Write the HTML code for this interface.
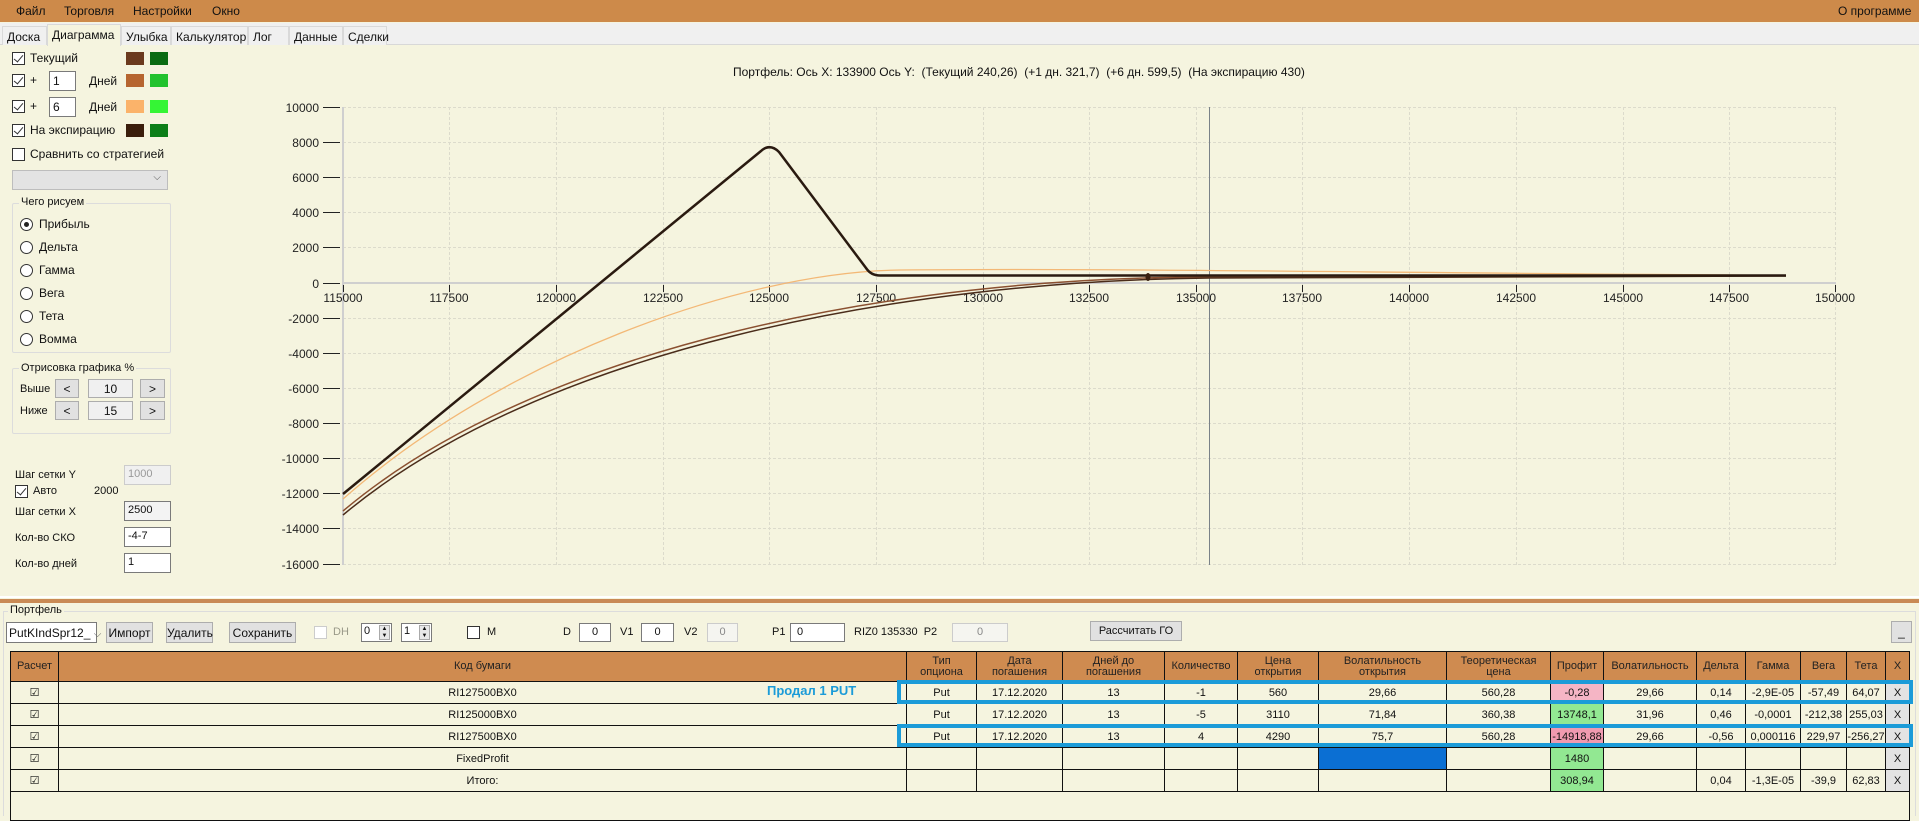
<!DOCTYPE html>
<html><head><meta charset="utf-8">
<style>
*{box-sizing:border-box;margin:0;padding:0}
body{width:1919px;height:816px;overflow:hidden;background:#f5f4df;font-family:"Liberation Sans",sans-serif;font-size:12px;color:#111;position:relative}
.a{position:absolute;white-space:nowrap}
.menu{left:0;top:0;width:1919px;height:22px;background:#cd8a4a}
.menu span{position:absolute;top:4px;font-size:12px}
.tabs{left:0;top:23px;width:1919px;height:22px;background:#f0f0f0;border-bottom:1px solid #d8d8d8}
.tab{position:absolute;top:3px;height:19px;border:1px solid #d9d9d9;border-bottom:none;background:#f0f0f0;font-size:12px;padding:3px 4px 0}
.cb{position:absolute;width:13px;height:13px;border:1px solid #333;background:#fff}
.cb.k::after{content:"";position:absolute;left:3px;top:0px;width:4px;height:8px;border-right:1px solid #333;border-bottom:1px solid #333;transform:rotate(40deg)}
.sw{position:absolute;width:18px;height:13px}
.inp{position:absolute;background:#fff;border:1px solid #7a7a7a;font-size:12px;padding:2px 3px;height:20px}
.rb{position:absolute;width:13px;height:13px;border:1px solid #333;border-radius:50%;background:#fff}
.grp{position:absolute;border:1px solid #dcdcdc;border-radius:2px}
.btn{position:absolute;background:#e1e1e1;border:1px solid #adadad;font-size:12px;text-align:center;padding-top:3px;height:21px}
table{position:absolute;left:10px;top:651px;border-collapse:collapse;table-layout:fixed;font-size:11px;font-family:"Liberation Sans Narrow","Liberation Sans",sans-serif}
td{border:1px solid #111;text-align:center;height:22px;padding:0;overflow:hidden;white-space:nowrap}
tr.h td{background:#cf8b50;height:30px;line-height:11px;font-size:11px;color:#222}
.pk{background:#f5b5c5}.pk2{background:#f09ab0}.gr{background:#92e892}.bl{background:#0b6fd3}.x{background:#e3e3e3}
</style></head><body>
<div class="a menu">
<span style="left:16px">Файл</span><span style="left:64px">Торговля</span><span style="left:133px">Настройки</span><span style="left:212px">Окно</span><span style="left:1838px">О программе</span>
</div>
<div class="a tabs">
<div class="tab" style="left:2px;width:45px">Доска</div>
<div class="tab" style="left:47px;width:74px;top:1px;height:22px;background:#f5f4df">Диаграмма</div>
<div class="tab" style="left:121px;width:50px">Улыбка</div>
<div class="tab" style="left:171px;width:77px">Калькулятор</div>
<div class="tab" style="left:248px;width:41px">Лог</div>
<div class="tab" style="left:289px;width:54px">Данные</div>
<div class="tab" style="left:343px;width:44px">Сделки</div>
</div>
<!-- left panel -->
<div class="cb k" style="left:12px;top:52px"></div><div class="a" style="left:30px;top:51px">Текущий</div>
<div class="sw" style="left:126px;top:52px;background:#6b3a1e"></div><div class="sw" style="left:150px;top:52px;background:#0a6b12"></div>
<div class="cb k" style="left:12px;top:74px"></div><div class="a" style="left:30px;top:73px">+</div>
<div class="inp" style="left:49px;top:71px;width:27px">1</div><div class="a" style="left:89px;top:74px">Дней</div>
<div class="sw" style="left:126px;top:74px;background:#b66530"></div><div class="sw" style="left:150px;top:74px;background:#22c22e"></div>
<div class="cb k" style="left:12px;top:100px"></div><div class="a" style="left:30px;top:99px">+</div>
<div class="inp" style="left:49px;top:97px;width:27px">6</div><div class="a" style="left:89px;top:100px">Дней</div>
<div class="sw" style="left:126px;top:100px;background:#fbb36a"></div><div class="sw" style="left:150px;top:100px;background:#35f535"></div>
<div class="cb k" style="left:12px;top:124px"></div><div class="a" style="left:30px;top:123px">На экспирацию</div>
<div class="sw" style="left:126px;top:124px;background:#3a1e0c"></div><div class="sw" style="left:150px;top:124px;background:#0c7e18"></div>
<div class="cb" style="left:12px;top:148px"></div><div class="a" style="left:30px;top:147px">Сравнить со стратегией</div>
<div class="a" style="left:12px;top:170px;width:156px;height:20px;background:#e3e3e3;border:1px solid #bdbdbd"><span style="position:absolute;right:6px;top:1px;font-size:10px;color:#555">⌵</span></div>
<div class="grp" style="left:12px;top:203px;width:159px;height:150px"></div>
<div class="a" style="left:19px;top:196px;background:#f5f4df;padding:0 2px;font-size:11px">Чего рисуем</div>
<div class="rb" style="left:20px;top:218px"><div style="position:absolute;left:3px;top:3px;width:5px;height:5px;border-radius:50%;background:#222"></div></div><div class="a" style="left:39px;top:217px">Прибыль</div>
<div class="rb" style="left:20px;top:241px"></div><div class="a" style="left:39px;top:240px">Дельта</div>
<div class="rb" style="left:20px;top:264px"></div><div class="a" style="left:39px;top:263px">Гамма</div>
<div class="rb" style="left:20px;top:287px"></div><div class="a" style="left:39px;top:286px">Вега</div>
<div class="rb" style="left:20px;top:310px"></div><div class="a" style="left:39px;top:309px">Тета</div>
<div class="rb" style="left:20px;top:333px"></div><div class="a" style="left:39px;top:332px">Вомма</div>
<div class="grp" style="left:12px;top:368px;width:159px;height:66px"></div>
<div class="a" style="left:19px;top:362px;background:#f5f4df;padding:0 2px;font-size:11px">Отрисовка графика %</div>
<div class="a" style="left:20px;top:383px;font-size:11px">Выше</div>
<div class="btn" style="left:55px;top:379px;width:24px;height:19px;padding-top:2px">&lt;</div>
<div class="a" style="left:88px;top:379px;width:45px;height:19px;border:1px solid #adadad;background:#f0f0f0;text-align:center;padding-top:2px">10</div>
<div class="btn" style="left:140px;top:379px;width:25px;height:19px;padding-top:2px">&gt;</div>
<div class="a" style="left:20px;top:405px;font-size:11px">Ниже</div>
<div class="btn" style="left:55px;top:401px;width:24px;height:19px;padding-top:2px">&lt;</div>
<div class="a" style="left:88px;top:401px;width:45px;height:19px;border:1px solid #adadad;background:#f0f0f0;text-align:center;padding-top:2px">15</div>
<div class="btn" style="left:140px;top:401px;width:25px;height:19px;padding-top:2px">&gt;</div>
<div class="a" style="left:15px;top:469px;font-size:11px">Шаг сетки Y</div>
<div class="inp" style="left:124px;top:465px;width:47px;background:#f0f0f0;border-color:#ccc;color:#999;font-size:11px">1000</div>
<div class="cb k" style="left:15px;top:485px"></div><div class="a" style="left:33px;top:485px;font-size:11px">Авто</div><div class="a" style="left:94px;top:485px;font-size:11px">2000</div>
<div class="a" style="left:15px;top:506px;font-size:11px">Шаг сетки X</div>
<div class="inp" style="left:124px;top:501px;width:47px;font-size:11px;background:#f3f3f3">2500</div>
<div class="a" style="left:15px;top:532px;font-size:11px">Кол-во СКО</div>
<div class="inp" style="left:124px;top:527px;width:47px;font-size:11px">-4-7</div>
<div class="a" style="left:15px;top:558px;font-size:11px">Кол-во дней</div>
<div class="inp" style="left:124px;top:553px;width:47px;font-size:11px">1</div>
<!-- chart -->
<div class="a" style="left:733px;top:65px;font-size:12px">Портфель: Ось X: 133900 Ось Y:&nbsp; (Текущий 240,26)&nbsp; (+1 дн. 321,7)&nbsp; (+6 дн. 599,5)&nbsp; (На экспирацию 430)</div>
<svg class="a" style="left:0;top:0" width="1919" height="600" font-family="Liberation Sans, sans-serif" font-size="12" fill="#222">
<g stroke="#dcdbcc" stroke-dasharray="3,2" stroke-width="1">
<line x1="343" y1="107.5" x2="1836" y2="107.5"/><line x1="343" y1="142.5" x2="1836" y2="142.5"/><line x1="343" y1="177.5" x2="1836" y2="177.5"/><line x1="343" y1="212.5" x2="1836" y2="212.5"/><line x1="343" y1="247.5" x2="1836" y2="247.5"/>
<line x1="343" y1="318.5" x2="1836" y2="318.5"/><line x1="343" y1="353.5" x2="1836" y2="353.5"/><line x1="343" y1="388.5" x2="1836" y2="388.5"/><line x1="343" y1="423.5" x2="1836" y2="423.5"/><line x1="343" y1="458.5" x2="1836" y2="458.5"/><line x1="343" y1="493.5" x2="1836" y2="493.5"/><line x1="343" y1="528.5" x2="1836" y2="528.5"/><line x1="343" y1="564.5" x2="1836" y2="564.5"/>
<line x1="449.5" y1="107" x2="449.5" y2="565"/><line x1="556.5" y1="107" x2="556.5" y2="565"/><line x1="663.5" y1="107" x2="663.5" y2="565"/><line x1="769.5" y1="107" x2="769.5" y2="565"/><line x1="876.5" y1="107" x2="876.5" y2="565"/><line x1="983.5" y1="107" x2="983.5" y2="565"/><line x1="1089.5" y1="107" x2="1089.5" y2="565"/><line x1="1196.5" y1="107" x2="1196.5" y2="565"/><line x1="1302.5" y1="107" x2="1302.5" y2="565"/><line x1="1409.5" y1="107" x2="1409.5" y2="565"/><line x1="1516.5" y1="107" x2="1516.5" y2="565"/><line x1="1623.5" y1="107" x2="1623.5" y2="565"/><line x1="1729.5" y1="107" x2="1729.5" y2="565"/><line x1="1835.5" y1="107" x2="1835.5" y2="565"/>
</g>
<line x1="343" y1="107" x2="343" y2="565" stroke="#cfcfcf" stroke-width="2"/>
<line x1="343" y1="283" x2="1836" y2="283" stroke="#cfcfcf" stroke-width="2"/>
<g stroke="#222" stroke-width="1">
<line x1="323" y1="107.5" x2="340" y2="107.5"/><line x1="323" y1="142.5" x2="340" y2="142.5"/><line x1="323" y1="177.5" x2="340" y2="177.5"/><line x1="323" y1="212.5" x2="340" y2="212.5"/><line x1="323" y1="247.5" x2="340" y2="247.5"/><line x1="323" y1="283.5" x2="340" y2="283.5"/><line x1="323" y1="318.5" x2="340" y2="318.5"/><line x1="323" y1="353.5" x2="340" y2="353.5"/><line x1="323" y1="388.5" x2="340" y2="388.5"/><line x1="323" y1="423.5" x2="340" y2="423.5"/><line x1="323" y1="458.5" x2="340" y2="458.5"/><line x1="323" y1="493.5" x2="340" y2="493.5"/><line x1="323" y1="528.5" x2="340" y2="528.5"/><line x1="323" y1="564.5" x2="340" y2="564.5"/>
<line x1="343.5" y1="285" x2="343.5" y2="292"/><line x1="449.5" y1="285" x2="449.5" y2="292"/><line x1="556.5" y1="285" x2="556.5" y2="292"/><line x1="663.5" y1="285" x2="663.5" y2="292"/><line x1="769.5" y1="285" x2="769.5" y2="292"/><line x1="876.5" y1="285" x2="876.5" y2="292"/><line x1="983.5" y1="285" x2="983.5" y2="292"/><line x1="1089.5" y1="285" x2="1089.5" y2="292"/><line x1="1196.5" y1="285" x2="1196.5" y2="292"/><line x1="1302.5" y1="285" x2="1302.5" y2="292"/><line x1="1409.5" y1="285" x2="1409.5" y2="292"/><line x1="1516.5" y1="285" x2="1516.5" y2="292"/><line x1="1623.5" y1="285" x2="1623.5" y2="292"/><line x1="1729.5" y1="285" x2="1729.5" y2="292"/><line x1="1835.5" y1="285" x2="1835.5" y2="292"/>
</g>
<g text-anchor="end">
<text x="319" y="112">10000</text><text x="319" y="147">8000</text><text x="319" y="182">6000</text><text x="319" y="217">4000</text><text x="319" y="252">2000</text><text x="319" y="288">0</text><text x="319" y="323">-2000</text><text x="319" y="358">-4000</text><text x="319" y="393">-6000</text><text x="319" y="428">-8000</text><text x="319" y="463">-10000</text><text x="319" y="498">-12000</text><text x="319" y="533">-14000</text><text x="319" y="569">-16000</text>
</g>
<g text-anchor="middle">
<text x="343" y="302">115000</text><text x="449" y="302">117500</text><text x="556" y="302">120000</text><text x="663" y="302">122500</text><text x="769" y="302">125000</text><text x="876" y="302">127500</text><text x="983" y="302">130000</text><text x="1089" y="302">132500</text><text x="1196" y="302">135000</text><text x="1302" y="302">137500</text><text x="1409" y="302">140000</text><text x="1516" y="302">142500</text><text x="1623" y="302">145000</text><text x="1729" y="302">147500</text><text x="1835" y="302">150000</text>
</g>
<line x1="1209.5" y1="107" x2="1209.5" y2="565" stroke="#7a8288" stroke-width="1"/>
<path d="M343,499 C500,360 740,272 900,270 C1100,268 1300,272 1786,275.5" fill="none" stroke="#f3b876" stroke-width="1.3"/>
<path d="M343,511 C540,345 900,277 1209,277 L1786,275.5" fill="none" stroke="#8a5030" stroke-width="1.5"/>
<path d="M343,515 C540,350 900,281 1209,278 L1786,276" fill="none" stroke="#4a2c1a" stroke-width="1.5"/>
<path d="M343,494 L761,151 Q770,143 779,152 L866,268 Q871,275.5 880,275.5 L1786,275.5" fill="none" stroke="#2a1a10" stroke-width="2.5"/>
<ellipse cx="1148" cy="277" rx="2.5" ry="4" fill="#3a2010"/>
</svg>
<!-- bottom -->
<div class="a" style="left:0;top:596px;width:1919px;height:2px;background:#fff"></div>
<div class="a" style="left:0;top:599px;width:1919px;height:4px;background:#c98a55"></div>
<div class="a" style="left:3px;top:611px;width:1913px;height:205px;border:1px solid #dcdcdc;border-bottom:none"></div>
<div class="a" style="left:8px;top:604px;font-size:11px;background:#f5f4df;padding:0 2px">Портфель</div>
<div class="a" style="left:6px;top:622px;width:91px;height:21px;background:#fff;border:1px solid #7a7a7a;font-size:12px;padding:3px 2px">PutKIndSpr12_ <span style="color:#666;font-size:10px">⌵</span></div>
<div class="btn" style="left:106px;top:622px;width:47px">Импорт</div>
<div class="btn" style="left:166px;top:622px;width:47px">Удалить</div>
<div class="btn" style="left:229px;top:622px;width:67px">Сохранить</div>
<div class="cb" style="left:314px;top:626px;border-color:#ccc"></div><div class="a" style="left:333px;top:626px;color:#998;font-size:11px">DH</div>
<div class="inp" style="left:361px;top:623px;width:31px;height:19px;padding:1px 2px;font-size:11px">0<span style="position:absolute;right:1px;top:1px;width:11px;height:15px;background:#e8e8e8;border:1px solid #aaa;font-size:6px;line-height:7px;text-align:center">▲<br>▼</span></div>
<div class="inp" style="left:401px;top:623px;width:31px;height:19px;padding:1px 2px;font-size:11px">1<span style="position:absolute;right:1px;top:1px;width:11px;height:15px;background:#e8e8e8;border:1px solid #aaa;font-size:6px;line-height:7px;text-align:center">▲<br>▼</span></div>
<div class="cb" style="left:467px;top:626px"></div><div class="a" style="left:487px;top:626px;font-size:11px">M</div>
<div class="a" style="left:563px;top:626px;font-size:11px">D</div><div class="inp" style="left:579px;top:623px;width:32px;height:19px;text-align:center;font-size:11px;padding:2px">0</div>
<div class="a" style="left:620px;top:626px;font-size:11px">V1</div><div class="inp" style="left:641px;top:623px;width:33px;height:19px;text-align:center;font-size:11px;padding:2px">0</div>
<div class="a" style="left:684px;top:626px;font-size:11px">V2</div><div class="inp" style="left:707px;top:623px;width:31px;height:19px;text-align:center;font-size:11px;padding:2px;border-color:#ccc;color:#888;background:#f5f5f0">0</div>
<div class="a" style="left:772px;top:626px;font-size:11px">P1</div><div class="inp" style="left:790px;top:623px;width:55px;height:19px;font-size:11px;padding:2px 6px">0</div>
<div class="a" style="left:854px;top:626px;font-size:11px">RIZ0 135330&nbsp; P2</div><div class="inp" style="left:952px;top:623px;width:56px;height:19px;text-align:center;font-size:11px;padding:2px;border-color:#ccc;color:#888;background:#f5f5f0">0</div>
<div class="btn" style="left:1090px;top:621px;width:92px;height:20px;font-size:11px">Рассчитать ГО</div>
<div class="btn" style="left:1891px;top:621px;width:21px;height:22px">_</div>
<div class="a" style="left:10px;top:651px;width:1900px;height:170px;border:1px solid #111"></div>
<table>
<colgroup><col style="width:48px"><col style="width:848px"><col style="width:70px"><col style="width:86px"><col style="width:102px"><col style="width:73px"><col style="width:81px"><col style="width:128px"><col style="width:104px"><col style="width:53px"><col style="width:93px"><col style="width:49px"><col style="width:55px"><col style="width:46px"><col style="width:39px"><col style="width:24px"></colgroup>
<tr class="h"><td>Расчет</td><td>Код бумаги</td><td>Тип<br>опциона</td><td>Дата<br>погашения</td><td>Дней до<br>погашения</td><td>Количество</td><td>Цена<br>открытия</td><td>Волатильность<br>открытия</td><td>Теоретическая<br>цена</td><td>Профит</td><td>Волатильность</td><td>Дельта</td><td>Гамма</td><td>Вега</td><td>Тета</td><td>X</td></tr>
<tr><td>☑</td><td>RI127500BX0</td><td>Put</td><td>17.12.2020</td><td>13</td><td>-1</td><td>560</td><td>29,66</td><td>560,28</td><td class="pk">-0,28</td><td>29,66</td><td>0,14</td><td>-2,9E-05</td><td>-57,49</td><td>64,07</td><td class="x">X</td></tr>
<tr><td>☑</td><td>RI125000BX0</td><td>Put</td><td>17.12.2020</td><td>13</td><td>-5</td><td>3110</td><td>71,84</td><td>360,38</td><td class="gr">13748,1</td><td>31,96</td><td>0,46</td><td>-0,0001</td><td>-212,38</td><td>255,03</td><td class="x">X</td></tr>
<tr><td>☑</td><td>RI127500BX0</td><td>Put</td><td>17.12.2020</td><td>13</td><td>4</td><td>4290</td><td>75,7</td><td>560,28</td><td class="pk2">-14918,88</td><td>29,66</td><td>-0,56</td><td>0,000116</td><td>229,97</td><td>-256,27</td><td class="x">X</td></tr>
<tr><td>☑</td><td>FixedProfit</td><td></td><td></td><td></td><td></td><td></td><td class="bl"></td><td></td><td class="gr">1480</td><td></td><td></td><td></td><td></td><td></td><td class="x">X</td></tr>
<tr><td>☑</td><td>Итого:</td><td></td><td></td><td></td><td></td><td></td><td></td><td></td><td class="gr">308,94</td><td></td><td>0,04</td><td>-1,3E-05</td><td>-39,9</td><td>62,83</td><td class="x">X</td></tr>
</table>
<div class="a" style="left:897px;top:680px;width:1016px;height:24px;border:4px solid #1b9bd8"></div>
<div class="a" style="left:897px;top:724px;width:1016px;height:23px;border:4px solid #1b9bd8"></div>
<div class="a" style="left:767px;top:683px;color:#1b9bd8;font-weight:bold;font-size:13px">Продал 1 PUT</div>
</body></html>
